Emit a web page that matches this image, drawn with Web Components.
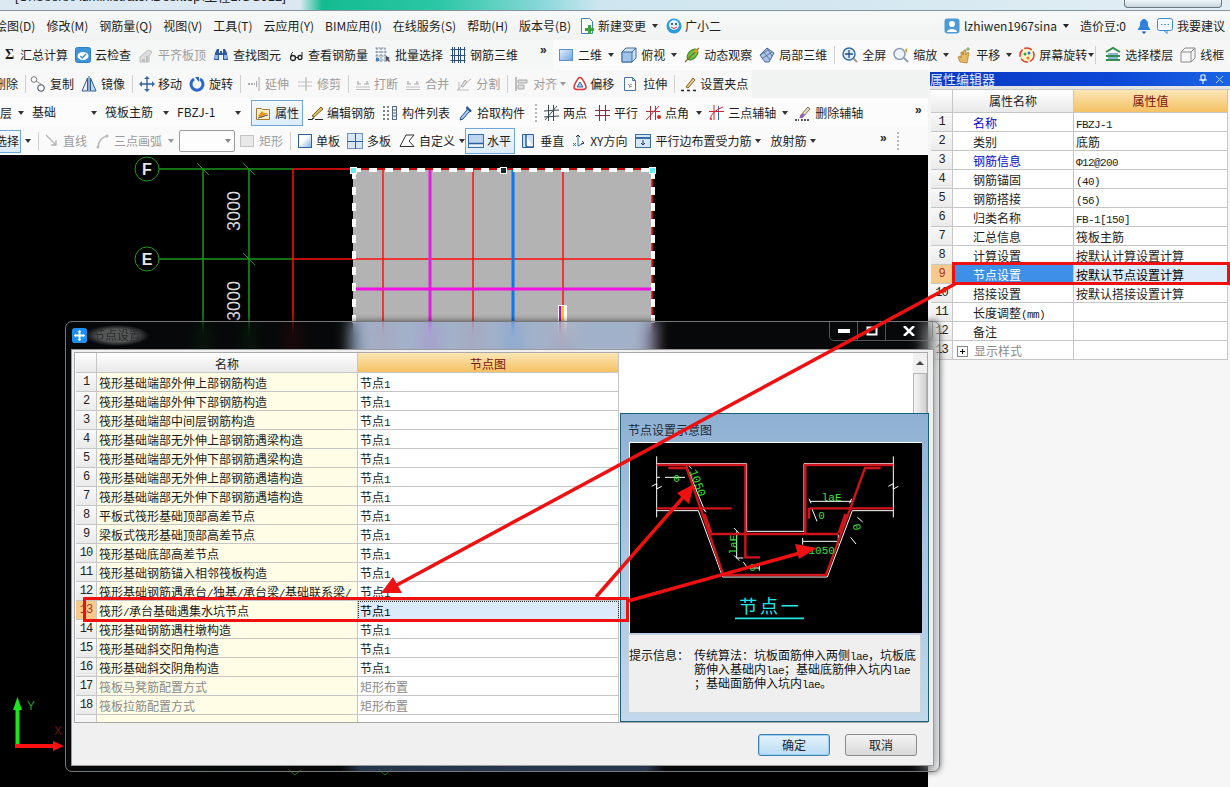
<!DOCTYPE html>
<html lang="zh-CN">
<head>
<meta charset="utf-8">
<title>节点设置</title>
<style>
html,body{margin:0;padding:0;background:#000;overflow:hidden}
body{font:12px/1.2 "Noto Sans CJK SC","Noto Sans",sans-serif;color:#1c1c1c}
</style>
</head>
<body>
<app-shell>
  <title-strip>- [C:\Users\Administrator\Desktop\工程1.GGJ12]</title-strip>
  <menu-row>
    <tb-item style="margin-left:-5px">绘图(D)</tb-item><tb-item>修改(M)</tb-item><tb-item>钢筋量(Q)</tb-item><tb-item>视图(V)</tb-item><tb-item>工具(T)</tb-item><tb-item>云应用(Y)</tb-item><tb-item>BIM应用(I)</tb-item><tb-item>在线服务(S)</tb-item><tb-item>帮助(H)</tb-item><tb-item>版本号(B)</tb-item>
    <tb-item icon="newdoc" w="14" style="margin-left:-2px" caret>新建变更</tb-item>
    <tb-item icon="smile" w="15" style="margin-left:-3px">广小二</tb-item>
    <tb-item icon="avatar" w="16" style="margin-left:auto">lzhiwen1967sina</tb-item>
    <tb-caret></tb-caret>
    <tb-item>造价豆:0</tb-item>
    <tb-item icon="bell" w="14"></tb-item>
    <tb-item icon="chat" w="16" style="margin-left:-5px;margin-right:5px">我要建议</tb-item>
  </menu-row>
  <tb-row h="30" style="--pad:3px;--bg:linear-gradient(90deg,#f5f6f6 553px,#fbfbfb 553px,#fbfbfb 930px,#f6f6f6 930px)">
    <tb-item glyph="Σ">汇总计算</tb-item>
    <tb-item icon="cloud">云检查</tb-item>
    <tb-item icon="level" disabled>平齐板顶</tb-item>
    <tb-item icon="binoc">查找图元</tb-item>
    <tb-item icon="glass">查看钢筋量</tb-item>
    <tb-item icon="batch">批量选择</tb-item>
    <tb-item icon="rebar3d">钢筋三维</tb-item>
    <tb-more style="margin-left:15px;margin-top:-10px"></tb-more>
    <tb-item icon="view2d" caret style="margin-left:3px">二维</tb-item>
    <tb-item icon="top" caret>俯视</tb-item>
    <tb-item icon="orbit">动态观察</tb-item>
    <tb-item icon="cube">局部三维</tb-item>
    <tb-sep></tb-sep>
    <tb-item icon="full">全屏</tb-item>
    <tb-item icon="zoom" caret>缩放</tb-item>
    <tb-item icon="pan" caret>平移</tb-item>
    <tb-item icon="spin" caret style="--cm:1px">屏幕旋转</tb-item>
    <tb-sep style="margin-left:-6px"></tb-sep>
    <tb-item icon="layers" style="margin-left:2px">选择楼层</tb-item>
    <tb-item icon="wire">线框</tb-item>
  </tb-row>
  <main-area>
    <left-col>
      <tb-row h="28" style="--bg:linear-gradient(90deg,#f8f8f8 752px,#f1f2f2 752px)">
        <tb-item style="margin-left:-6px">删除</tb-item>
        <tb-sep></tb-sep>
        <tb-item icon="copy" style="margin-left:-3px">复制</tb-item>
        <tb-item icon="mirror">镜像</tb-item>
        <tb-sep></tb-sep>
        <tb-item icon="move" w="14">移动</tb-item>
        <tb-item icon="rot">旋转</tb-item>
        <tb-sep></tb-sep>
        <tb-item icon="ext" w="13" disabled>延伸</tb-item>
        <tb-item icon="trim" w="17" disabled>修剪</tb-item>
        <tb-sep></tb-sep>
        <tb-item icon="brk" w="14" disabled>打断</tb-item>
        <tb-item icon="brk" disabled>合并</tb-item>
        <tb-item icon="split" disabled>分割</tb-item>
        <tb-sep></tb-sep>
        <tb-item icon="alignl" w="14" disabled caret style="--cm:3px">对齐</tb-item>
        <tb-item icon="offset" w="13">偏移</tb-item>
        <tb-item icon="stretch" w="18">拉伸</tb-item>
        <tb-sep></tb-sep>
        <tb-item icon="grip" w="14">设置夹点</tb-item>
      </tb-row>
      <tb-row h="29" style="--bg:#fcfcfc">
        <tb-item caret>层</tb-item>
        <tb-combo w="68" style="margin-left:1px">基础</tb-combo>
        <tb-combo w="67" style="margin-left:-2px">筏板主筋</tb-combo>
        <tb-combo w="67" style="margin-left:-2px">FBZJ-1</tb-combo>
        <tb-item icon="attr" active style="margin-left:0;--ap:3px">属性</tb-item>
        <tb-item icon="edit" w="15" style="margin-left:-2px">编辑钢筋</tb-item>
        <tb-item icon="list">构件列表</tb-item>
        <tb-item icon="pick">拾取构件</tb-item>
        <tb-sep dotted style="margin-left:3px"></tb-sep>
        <tb-item icon="twopt" w="15">两点</tb-item>
        <tb-item icon="para" w="14" style="margin-left:2px">平行</tb-item>
        <tb-item icon="pangle" w="14" caret style="margin-left:2px;--cm:7px">点角</tb-item>
        <tb-item icon="tri" w="15" caret>三点辅轴</tb-item>
        <tb-item icon="delax">删除辅轴</tb-item>
        <tb-more style="margin-left:auto;margin-right:5px;margin-top:-6px"></tb-more>
      </tb-row>
      <tb-row h="28" style="--bg:#fafafa">
        <tb-item active caret style="margin-left:-7px;--ap:1px;--cm:4px;--ah:23px">选择</tb-item>
        <tb-sep></tb-sep>
        <tb-item icon="line" w="13" disabled>直线</tb-item>
        <tb-item icon="arc" w="14" disabled caret style="margin-left:2px">三点画弧</tb-item>
        <tb-combo w="56" boxed style="margin-left:-2px"></tb-combo>
        <tb-item icon="chk" disabled style="margin-left:-3px">矩形</tb-item>
        <tb-sep></tb-sep>
        <tb-item icon="single" w="14">单板</tb-item>
        <tb-item icon="multi">多板</tb-item>
        <tb-item icon="custom" w="17" caret style="--cm:4px">自定义</tb-item>
        <tb-item icon="horiz" w="14" active style="margin-left:-7px;--ap:3px">水平</tb-item>
        <tb-item icon="vert" style="margin-left:-2px">垂直</tb-item>
        <tb-item icon="xy" w="15">XY方向</tb-item>
        <tb-item icon="paredge" w="17" caret style="--cm:4px">平行边布置受力筋</tb-item>
        <tb-item caret style="--cm:4px;margin-left:2px">放射筋</tb-item>
        <tb-more style="margin-left:auto;margin-top:-6px"></tb-more>
        <tb-sep dotted style="margin-left:2px;margin-right:29px"></tb-sep>
      </tb-row>
      <cad-canvas></cad-canvas>
    </left-col>
    <prop-panel>
      <data-grid cols="22px 121px 154px" hh="23" head="|属性名称|属性值"
        rows="1|名称|FBZJ-1|b;2|类别|底筋|;3|钢筋信息|Φ12@200|b;4|钢筋锚固|(40)|;5|钢筋搭接|(56)|;6|归类名称|FB-1[150]|;7|汇总信息|筏板主筋|;8|计算设置|按默认计算设置计算|;9|节点设置|按默认节点设置计算|s;10|搭接设置|按默认搭接设置计算|;11|长度调整(mm)||;12|备注||;13|显示样式||gp" indent></data-grid>
    </prop-panel>
  </main-area>
  <node-dialog></node-dialog>
  <annot-layer></annot-layer>
</app-shell>

<script>
const ICONS={
newdoc:'<path d="M2.500.5h8l3 3v12h-11z" fill="#fff" stroke="#3c7fc4"/><path d="M9 7h3v3h3v3h-3v3H9v-3H6v-3h3z" fill="#3aa63a"/>',
smile:'<circle cx="8" cy="8" r="7.500" fill="#2b9be0"/><circle cx="8" cy="7" r="5" fill="#dff3ff"/><circle cx="6" cy="6" r="1" fill="#135"/><circle cx="10" cy="6" r="1" fill="#135"/><path d="M5 9q3 3 6 0" stroke="#e33" fill="none"/>',
avatar:'<rect x=".5" y=".5" width="15" height="15" rx="3" fill="#4d9ad8"/><circle cx="8" cy="6" r="3" fill="#fff"/><path d="M3 14c0-4 10-4 10 0z" fill="#fff"/>',
bell:'<path d="M7 1h2l1 1c2 1 2 3 2 6l2 3v1H2v-1l2-3c0-3 0-5 2-6z" fill="#2f7fdc"/><path d="M5.500 13.500h5L8 16z" fill="#1d5fb0"/>',
chat:'<rect x=".5" y=".5" width="15" height="12" rx="2" fill="#f3f9ff" stroke="#3b8ad4"/><path d="M7 12.500l3 3v-3z" fill="#f3f9ff" stroke="#3b8ad4"/><path d="M4 6.500h1.500M7.300 6.500h1.500M10.500 6.500H12" stroke="#3b8ad4"/>',
cloud:'<rect x=".5" y=".5" width="15" height="15" rx="2" fill="#3f94d8" stroke="#2f7cc0"/><ellipse cx="8" cy="9" rx="5.500" ry="4" fill="#fff"/><path d="M5.300 9l2 2 3.700-4" stroke="#3f94d8" fill="none" stroke-width="1.500"/>',
level:'<path d="M2 15V10l8-7 4 2-3 4v6z" fill="#dcdcdc" stroke="#bdbdbd"/><path d="M4 15v-3h3v3zM8 15V9h2v6z" fill="#bfbfbf"/>',
binoc:'<path d="M2 6l2-4h2v4h1V4h2v2h1V2h2l2 4 1 7H10V8H6v5H1z" fill="#2a5aa0"/><path d="M2 8h3v4H2zM11 8h3v4h-3z" fill="#8fb8e8"/>',
glass:'<circle cx="5" cy="11" r="2.500" fill="none" stroke="#222" stroke-width="1.300"/><circle cx="12" cy="10.500" r="2" fill="none" stroke="#222" stroke-width="1.300"/><path d="M7.500 10.500h2.500M3 9q0-3 2-4M14 9V5" stroke="#222" fill="none"/>',
batch:'<path d="M.5 1h10M.5 5h12M.5 9h12M.5 13h14M2 1v14M6 1v14M10 1v14" stroke="#6a8199" fill="none" stroke-dasharray="2 1"/><path d="M1 11h3v3H1z" fill="#3d7fc4"/><path d="M11 9l4 2-2 1 2 2-1 1-2-2-1 2z" fill="#445"/>',
rebar3d:'<path d="M.5 2.500h15M.5 8.500h15M.5 13.500h15M2.500 0v16M4.500 0v16M8.500 0v16M10.500 0v16M14.500 0v16" stroke="#2d4e7c" fill="none"/>',
view2d:'<rect x="1.500" y="2.500" width="13" height="11" fill="url(#b)" stroke="#5c8ec8"/><defs><linearGradient id="b" x1="0" y1="0" x2="1" y2="1"><stop offset="0" stop-color="#e4f0fc"/><stop offset="1" stop-color="#6ea4e0"/></linearGradient></defs>',
top:'<path d="M1 5l4-4h10v10l-4 4H1z" fill="#cfe2f5" stroke="#3a6a9a"/><path d="M1 5h10v10H1z" fill="#9fc3ea" stroke="#3a6a9a"/><path d="M11 5l4-4" stroke="#3a6a9a"/>',
orbit:'<ellipse cx="8.500" cy="7.500" rx="4" ry="6.500" transform="rotate(45 8.500 7.500)" fill="#6fc23e" stroke="#2f7f24"/><path d="M1 15L15 1" stroke="#8a6a2a" stroke-width="1.200"/><circle cx="12" cy="4" r="1.800" fill="#e8a020"/>',
cube:'<path d="M8 1l7 5-5 9H6L1 8z" fill="#a9c4e6" stroke="#4e6a93"/><path d="M4 4l7 9M8 1l5 8M1 8l8-5M4 11l9-6" stroke="#4e6a93" fill="none" stroke-width=".8"/>',
full:'<circle cx="7" cy="7" r="6" fill="#e2edf8" stroke="#2c6aa8" stroke-width="1.400"/><path d="M7 3v8M3 7h8" stroke="#1f4f84" stroke-width="1.300"/><path d="M11.500 11.500l3.500 3.500" stroke="#999" stroke-width="2"/>',
zoom:'<circle cx="6.500" cy="7" r="5.500" fill="#eef3f8" stroke="#8a9fb4" stroke-width="1.500"/><path d="M11 11l4 4" stroke="#8a9fb4" stroke-width="2"/><path d="M12 3l2-2v5z" fill="#d89a20"/>',
pan:'<path d="M4 15l-2-5 2-1 1 2V5l2 0v3l1-5h2v5l2-3 1 1-1 5-1 5z" fill="#e4b860" stroke="#9c6b18" stroke-width=".6"/><path d="M12 0v4M10 2h4" stroke="#6a5"/>',
spin:'<circle cx="8" cy="8" r="7" fill="#fff4c8" stroke="#e23a2a" stroke-width="1.500" stroke-dasharray="8 2"/><circle cx="6" cy="7" r="1.500" fill="#40a040"/><circle cx="10" cy="6" r="1.500" fill="#3070d0"/><circle cx="9" cy="11" r="1.500" fill="#e08020"/>',
layers:'<path d="M1 5l7-4 7 4M1 9h14M1 13h14" stroke="#2f8f4a" stroke-width="2" fill="none"/><path d="M3 7h10M3 11h10" stroke="#2a6fb8"/>',
wire:'<path d="M1 5l4-4h10v10l-4 4H1zM1 5h10v10M11 5l4-4" fill="none" stroke="#8a8a8a"/>',
copy:'<circle cx="4" cy="3.500" r="2.800" fill="#fff" stroke="#777"/><circle cx="11" cy="12" r="3.300" fill="#fff" stroke="#345"/><path d="M6 5l8 5" stroke="#888"/>',
mirror:'<path d="M6.500 2L1 15h5.500z" fill="#e6eff8" stroke="#2e5f92"/><path d="M9.500 2L15 15H9.500z" fill="#c4d9f0" stroke="#2e5f92"/><path d="M8 0v16" stroke="#2e5f92"/>',
move:'<path d="M8 1v14M1 8h14" stroke="#2f5f98" stroke-width="1.300"/><path d="M8 0l3 3H5zM8 16l3-3H5zM0 8l3-3v6zM16 8l-3-3v6z" fill="#3b6da8"/>',
rot:'<path d="M5 3a6 6 0 1 0 6 0" fill="none" stroke="#2a68c8" stroke-width="3"/><path d="M6 1h4v5z" fill="#2a68c8"/>',
ext:'<path d="M1 8h7" stroke="#aaa" stroke-dasharray="2 1" stroke-width="2"/><path d="M9.500 5v6M12 1v14" stroke="#aaa"/>',
trim:'<path d="M1 6h14M1 10h14" stroke="#c4c4c4"/><path d="M9 1v14" stroke="#aaa"/>',
brk:'<path d="M1 11h14M1 13.500h14" stroke="#c0c0c0"/><path d="M2 8h4M9 8h5M3 5v3M12 5v3" stroke="#a8a8a8" stroke-width="1.200"/>',
split:'<path d="M1 14L15 3M1 14h12M3 6v8" stroke="#bbb" fill="none"/><path d="M5 10l4-6 2 2-4 5z" fill="#ddd" stroke="#aaa"/>',
alignl:'<path d="M2 1v14" stroke="#aaa" stroke-width="1.500"/><path d="M4 4h9v3H4zM4 9h6v4H4z" fill="#ddd" stroke="#aaa"/>',
offset:'<path d="M8 1.500c2 0 6 7 6 10 0 2-2 2-6 2s-6 0-6-2c0-3 4-10 6-10z" fill="#fff" stroke="#d33" stroke-width="1.500"/><path d="M8 6l3 5H5z" fill="#9fc4ea" stroke="#3a6a9a"/>',
stretch:'<path d="M2.500 1.500h8l3 3v10h-11z" fill="#fff" stroke="#47749e"/><path d="M10.500 1.500v3h3" fill="none" stroke="#47749e"/><path d="M6 8l3 3M9 8v3H6" stroke="#446" stroke-dasharray="1 1" fill="none"/>',
grip:'<path d="M0 14.500h3M6 14.500h3M12 14.500h3" stroke="#222" stroke-width="1.500"/><path d="M5 11l7-9 2 2-7 8z" fill="#e8cc90" stroke="#80601c"/>',
attr:'<path d="M1.500 3.500h5l1 1h7v10h-13z" fill="#fbeec8" stroke="#a47a2e"/><path d="M3 11l4-5 2 2 4 0-5 4-2 1z" fill="#e8951e"/><path d="M3 13l10-3" stroke="#556"/>',
edit:'<path d="M0 14.500h4l2-2M7 14.500h8" stroke="#222" stroke-width="1.200" fill="none"/><path d="M4 11l9-9 2 2-9 8z" fill="#e4c070" stroke="#7a5a18"/>',
list:'<path d="M1 2h2M5 2h2M1 6h2M5 6h2M1 10h2M5 10h2M1 14h2M5 14h2" stroke="#556" stroke-width="1.500"/><rect x="10.500" y="1.500" width="4" height="13" fill="#eef2f6" stroke="#5b6b7a"/><path d="M11 5h3M11 8h3M11 11h3" stroke="#5b6b7a"/>',
pick:'<path d="M10 2l4 4-2 1-6 7-3 1 1-3 6-7z" fill="#a9c9ee" stroke="#1f4f94"/><path d="M10 1l5 5-2 1-4-4z" fill="#1f4f94"/>',
twopt:'<path d="M4.500 0v16M9.500 0v16M0 6l15-1M0 12l15-1M1 15L13 1" stroke="#3a4a55" fill="none"/>',
para:'<path d="M4.500 0v16M10.500 0v16M0 5.500h15M0 10.500h15" stroke="#8a2a3a" fill="none"/>',
pangle:'<path d="M4.500 1v14M9.500 1v14M0 6.500h14M0 15L13 1" stroke="#b5303a" fill="none"/><circle cx="13" cy="12" r="2" fill="#d22"/>',
tri:'<path d="M9.500 1v14" stroke="#3a6ab0"/><path d="M0 6.500h15M1 14Q3 6 14 2M5 0v15" stroke="#d81f2f" fill="none"/><circle cx="2" cy="14" r="1" fill="#d81f2f"/>',
delax:'<path d="M0 15h4M6 15h9" stroke="#222" stroke-width="1.300" stroke-dasharray="2 1"/><path d="M5 11l8-9 2 2-8 9z" fill="#e8e0c8" stroke="#7a6a4a"/><path d="M4 13l4-5 2 2-3 3z" fill="#9a5ad0"/>',
line:'<path d="M1 2l10 10M11 7v5H6" stroke="#b5b5b5" stroke-width="1.300" fill="none"/>',
arc:'<path d="M3 14Q4 5 12 3" stroke="#bbb" stroke-width="1.500" fill="none"/><circle cx="3" cy="14" r="1.500" fill="#bbb"/><circle cx="12" cy="3" r="1.500" fill="#bbb"/>',
chk:'<rect x="1.500" y="2.500" width="13" height="11" fill="#e8e8e8" stroke="#c4c4c4"/>',
single:'<rect x="1.500" y="1.500" width="13" height="13" fill="url(#s)" stroke="#2c5f9e"/><defs><linearGradient id="s" x1="0" y1="0" x2="1" y2="1"><stop offset=".4" stop-color="#fff"/><stop offset="1" stop-color="#7fb0e8"/></linearGradient></defs>',
multi:'<rect x=".5" y=".5" width="15" height="15" fill="#d8e6f5" stroke="#6e93ba"/><path d="M8.500 0v16M0 8.500h16" stroke="#2c5f9e"/>',
custom:'<path d="M1 13.500L7 2h8L10 8l5 5.500z" fill="#fff" stroke="#333"/>',
horiz:'<rect x=".5" y="1.500" width="15" height="13" fill="#e6f0fa" stroke="#3b6ea6"/><rect x="1" y="2" width="14" height="8" fill="#bcd5ef"/><path d="M1 10.500h14" stroke="#2c5f9e" stroke-width="1.500"/>',
vert:'<path d="M2.500 1.500h11v13h-11z" fill="#cfe1f5" stroke="#2c5f9e"/><path d="M6 2v10q0 2 2 2h5" fill="#fff" stroke="#2c5f9e" stroke-width="1.500"/>',
xy:'<path d="M7 2v11M7 13l6-3" stroke="#2a6fb8" fill="none"/><path d="M5 4l2-2 2 2M11 8l2 2-3 1" stroke="#333" fill="none"/><path d="M2 10l3 3M5 10l-3 3" stroke="#2a6fb8"/>',
paredge:'<rect x=".5" y="1.500" width="15" height="13" fill="#d5e6f8" stroke="#3a6ea6"/><path d="M1 5h14" stroke="#3a6ea6" stroke-width="2"/><path d="M8 7v5M6 10l2 2 2-2" stroke="#2a3a5a" fill="none"/>'
};
class Base extends HTMLElement{
  constructor(){super();this.attachShadow({mode:'open'});}
  connectedCallback(){this.shadowRoot.innerHTML=`<style>${this.css()}</style>${this.tpl()}`;}
  css(){return ':host{display:block}'} tpl(){return '<slot></slot>'}
}
const mono=s=>s.replace(/[\x20-\x7eΦ]+/g,m=>`<span class="a">${m}</span>`);
const reg=(n,css,tpl)=>customElements.define(n,class extends Base{css(){return css.call?css.call(this):css}tpl(){return tpl?tpl.call(this):'<slot></slot>'}});
const MONO='.a{font:11px "Liberation Mono",monospace;letter-spacing:-.6px}';

reg('app-shell',':host{display:flex;flex-direction:column;position:relative;width:1230px;height:787px;overflow:hidden;background:#f3f4f4}');
reg('title-strip',`:host{display:flex;height:10px;flex:none;overflow:hidden;border-bottom:1px solid #87929b;
 background:linear-gradient(90deg,#dde9f2 0,#dbe8f2 300px,#13bb90 322px,#2cc7a6 440px,#8fd9dc 548px,#cfe6f0 600px,#d6e8f0 900px,#e4eff5 100%)}
 .t{margin:-12px 0 0 7px;font:13px/18px "Liberation Sans","Noto Sans CJK SC",sans-serif;color:#222;white-space:nowrap}
 .w{margin-left:auto;margin-right:8px;width:96px;height:7px;border:1px solid #6c7780;border-top:0;border-radius:0 0 4px 4px;background:linear-gradient(#eef4f8,#c8d6e0)}`,
 ()=>'<div class="t"><slot></slot></div><div class="w"></div>');
reg('menu-row',':host{display:flex;align-items:center;gap:11px;height:29px;flex:none;overflow:hidden;background:linear-gradient(#f7f8f8,#f1f2f2)}');
reg('tb-row',function(){return `:host{display:flex;align-items:center;gap:7px;height:${this.getAttribute('h')}px;flex:none;overflow:hidden;padding-left:var(--pad,0);box-sizing:border-box;background:var(--bg,#f5f6f6)}`});
reg('main-area',':host{display:flex;flex:1;min-height:0}');
reg('left-col',':host{display:flex;flex-direction:column;flex:0 0 928px;width:928px}');
reg('tb-caret',':host{display:block;flex:none;width:0;height:0;margin-left:-5px;border:3px solid transparent;border-top:4px solid #222;border-bottom:0}',()=>'');
customElements.define('x-icon',class extends Base{
  css(){const w=this.getAttribute('w')||16;return `:host{display:flex;justify-content:center;flex:none;width:${w}px;height:16px}svg{flex:none;width:16px;height:16px;overflow:visible}`}
  tpl(){return `<svg viewBox="0 0 16 16">${ICONS[this.getAttribute('name')]||''}</svg>`}
});
customElements.define('tb-item',class extends Base{
  css(){return `:host{display:inline-flex;align-items:center;flex:none;gap:4px;white-space:nowrap;color:#1e1e1e;font-size:12px;line-height:16px}
   :host([disabled]){color:#9c9c9c}
   .bg{display:contents}
   :host([active]) .bg{display:inline-flex;align-items:center;gap:4px;height:var(--ah,26px);box-sizing:border-box;border:1px solid #6ea6d8;background:linear-gradient(#f4f9fd,#dcecfa);padding:0 var(--ap,2px)}
   .g{font:bold 14px/16px "Liberation Serif",serif;width:13px;text-align:center}
   .c{flex:none;width:0;height:0;border:3px solid transparent;border-top:4px solid #333;border-bottom:0;margin-left:calc(var(--cm,6px) - 4px)}
   :host([disabled]) .c{border-top-color:#999}`}
  tpl(){const ic=this.getAttribute('icon'),g=this.getAttribute('glyph');
    return `<div class="bg">${ic?`<x-icon name="${ic}" w="${this.getAttribute('w')||16}"></x-icon>`:''}${g?`<span class="g">${g}</span>`:''}<slot></slot></div>${this.hasAttribute('caret')?'<span class="c"></span>':''}`}
});
reg('tb-sep',function(){return `:host{display:block;flex:none;width:${this.hasAttribute('dotted')?0:1}px;height:18px;${this.hasAttribute('dotted')?'border-left:2px dotted #b4b8bf':'background:#cfcfcf'}}`},()=>'');
reg('tb-more',':host{display:block;flex:none;width:8px;font:bold 12px/12px "Liberation Sans",sans-serif;color:#222}',()=>'»');
customElements.define('tb-combo',class extends Base{
  css(){const b=this.hasAttribute('boxed');return `:host{display:flex;align-items:center;justify-content:space-between;box-sizing:border-box;flex:none;width:${this.getAttribute('w')}px;height:${b?22:24}px;padding:0 3px 0 ${b?4:0}px;${b?'background:#fdfdfd;border:1px solid #9a9a9a;border-radius:2px;':''}white-space:nowrap}
  i{width:0;height:0;border:3px solid transparent;border-top:4px solid ${b?'#888':'#333'};border-bottom:0}`}
  tpl(){return '<span><slot></slot></span><i></i>'}
});
reg('cad-canvas',':host{display:block;flex:1;background:#000}svg{display:block}',()=>`
<svg width="928" height="632" viewBox="0 155 928 632" font-family="Liberation Sans,sans-serif">
 <rect x="353" y="170" width="299" height="530" fill="#b3b3b3"/>
 <g stroke="#1c961c" fill="none" stroke-width="1.500">
  <path d="M159 169H293M159 259H293M203 169V765M249 169V765"/>
 </g>
 <g stroke="#1c961c" fill="none">
  <path d="M197 163l12 12M243 163l12 12M243 253l12 12"/>
  <circle cx="147" cy="169" r="12"/><circle cx="147" cy="259" r="12"/>
  <path d="M288 769l7 6 7-6M378 769l7 6 7-6"/>
 </g>
 <g fill="#e6e6e6" font-weight="bold" font-size="16" text-anchor="middle"><text x="147" y="175">F</text><text x="147" y="265">E</text></g>
 <g fill="#dcdcdc" font-size="18" text-anchor="middle"><text transform="translate(240 211) rotate(-90)">3000</text><text transform="translate(240 301) rotate(-90)">3000</text></g>
 <g stroke="#ff1010" fill="none" stroke-width="1.500"><path d="M293 169H652M293 259H652M293 169V765M383 169V760M473 169V760M563 169V760M652 169V760"/></g>
 <path d="M430 170V760" stroke="#e020e0" stroke-width="3"/><path d="M513 170V760" stroke="#0a78f0" stroke-width="3"/>
 <path d="M353 289H652" stroke="#f010e0" stroke-width="3"/>
 <rect x="558" y="305" width="9" height="30" fill="#fff"/><rect x="559" y="306" width="2" height="30" fill="#b010c0"/><rect x="561" y="306" width="3" height="30" fill="#ffc800"/>
 <path d="M353.500 171V330M652.500 171V330M353 170H652" stroke="#fff" stroke-width="4" fill="none" stroke-dasharray="8 8" shape-rendering="crispEdges"/>
 <g fill="#102a2a" stroke="#fff" shape-rendering="crispEdges"><rect x="350.500" y="167.500" width="6" height="6" fill="#6ee"/><rect x="500.500" y="167.500" width="6" height="6"/><rect x="649.500" y="167.500" width="6" height="6" fill="#6ee"/></g>
 <path d="M17.500 747V708" stroke="#1ee61e" stroke-width="4"/><path d="M17.500 697l4.500 13h-9z" fill="#1ee61e"/>
 <path d="M15 746H54" stroke="#ff1010" stroke-width="4"/><path d="M64 746l-11-5v10z" fill="#ff1010"/>
 <text x="27" y="710" font-size="12" fill="#2a9a2a">Y</text>
 <text x="54" y="735" font-size="12" fill="#701818">X</text>
</svg>`);
reg('prop-panel',`:host{display:block;flex:0 0 300px;width:300px;margin-left:2px;background:#f6f6f6;box-sizing:border-box;padding-top:2px}
 .t{display:flex;align-items:center;height:14px;padding-right:6px;color:#dfeaff;font-size:13px;line-height:14px;background:linear-gradient(90deg,#0a39c2,#0c47d6 60%,#1a63e4)}
 .t span{flex:1}.t svg{margin-left:7px}
 .b{height:3px;background:#e4e4e4;border-bottom:1px solid #c8c8c8}
 ::slotted(data-grid){margin-left:1px}`,
 ()=>`<div class="t"><span>属性编辑器</span><svg width="10" height="10" viewBox="0 0 10 10"><path d="M3 1h4v5H3zM1 6h8M5 6v4" stroke="#fff" fill="none"/></svg><svg width="9" height="9" viewBox="0 0 9 9"><path d="M1 1l7 7M8 1L1 8" stroke="#b8d0f0"/></svg></div><div class="b"></div><slot></slot>`);
customElements.define('data-grid',class extends Base{
  css(){const ind=this.hasAttribute('indent');return `:host{display:grid;grid-template-columns:${this.getAttribute('cols')};grid-template-rows:${this.getAttribute('hh')}px;grid-auto-rows:19px;font-size:12px;line-height:19px;width:max-content}
  div{box-sizing:border-box;border-right:1px solid #c6c6c6;border-bottom:1px solid #c6c6c6;white-space:nowrap;overflow:hidden;padding-left:2px;background:#fff;color:#1c1c1c}
  .h{text-align:center;line-height:21px;background:linear-gradient(#fff,#e9e9e9);padding:0}
  .h.v{background:linear-gradient(#fbe6b6,#f5c163);color:#7c1212}
  .n{padding:0;text-align:center;background:linear-gradient(#f9f9f9,#eaeaea);color:#222;font:12px/19px "Liberation Mono",monospace;letter-spacing:-1px}
  .c1{padding-left:${ind?20:2}px;${ind?'':'background:#fffde6;'}}
  .b{color:#0a0ac8}.g{color:#8a8a8a}
  .n.sel{background:#f9c98a;color:#a33}
  .c1.s{background:#3e8fe8;color:#fff}.c2.s{background:#dcebfb;color:#000}
  .c2.d{background:#dcebfb;color:#000;outline:1px dotted #333;outline-offset:-1px}
  ${MONO}
  .p{display:inline-block;width:9px;height:9px;border:1px solid #888;background:linear-gradient(90deg,#000,#000) center/5px 1px no-repeat,linear-gradient(#000,#000) center/1px 5px no-repeat,#fff;vertical-align:-1px;margin:0 6px 0 -16px}`}
  tpl(){
    const h=this.getAttribute('head').split('|');
    const hd=`<div class="h"></div><div class="h">${h[1]}</div><div class="h v">${h[2]}</div>`;
    const rows=this.getAttribute('rows').split(';').map(r=>{const[n,a,b,f='']=r.split('|');
      const col=(f.includes('g')?' g':'')+(f.includes('b')?' b':'');
      const sel=f.includes('s')||f.includes('d');
      return `<div class="n${sel?' sel':''}">${n}</div><div class="c1${col}${f.includes('s')?' s':''}${f.includes('d')?' d':''}">${f.includes('p')?'<span class="p"></span>':''}${mono(a)}</div><div class="c2${f.includes('g')&&!this.hasAttribute('indent')?' g':''}${f.includes('s')?' s':''}${f.includes('d')?' d':''}">${mono(b)}</div>`}).join('');
    return hd+rows;
  }
});
reg('scroll-bar',`:host{display:block;width:14px;background:#f0f0f0;flex:none;height:100%}
 .u{height:20px;display:flex;align-items:center;justify-content:center}
 .u i{width:0;height:0;border:4px solid transparent;border-bottom:4px solid #444;border-top:0}
 .t{height:60px;background:linear-gradient(90deg,#f4f4f4,#d2d2d2);border:1px solid #b5b5b5;box-sizing:border-box}`,()=>'<div class="u"><i></i></div><div class="t"></div>');
reg('dlg-button',function(){const p=this.hasAttribute('primary');return `:host{display:flex;align-items:center;justify-content:center;box-sizing:border-box;width:72px;height:22px;border-radius:3px;font-size:12px;color:#222;
 border:1px solid ${p?'#3c7fb1':'#8a8a8a'};background:linear-gradient(${p?'#e4f2fb,#b9dcf4':'#f4f4f4,#d8d8d8'});${p?'box-shadow:inset 0 0 0 1px #9bd0f0;':''}}`});
reg('hint-box',`:host{display:grid;grid-template-columns:65px 1fr;margin:1px 7px 0 7px;height:79px;box-sizing:border-box;padding-top:14px;background:#efefef;font-size:12px;line-height:12px;color:#111;border:1px solid #c9d3dc}
 ${MONO}`,()=>`<span>提示信息：</span><span>${mono('传统算法：坑板面筋伸入两侧lae，坑板底')}<br>${mono('筋伸入基础内lae；基础底筋伸入坑内lae')}<br>${mono('；基础面筋伸入坑内lae。')}</span>`);
reg('node-diagram',':host{display:block;margin-left:8px;width:292px;height:190px;background:#000;border:solid #fff;border-width:1px 0 0 1px}svg{display:block}',()=>`
<svg width="291" height="190" viewBox="30 95 873 570" font-family="Liberation Mono,monospace">
 <g stroke="#fff" stroke-width="3" fill="none">
  <path d="M110 135V318M820 135V318"/>
  <path d="M110 157H380V360H552V157H820"/>
  <path d="M110 298H235L308 497H622L697 298H820"/>
  <path d="M95 225l15-8v16l15-8M805 225l15-8v16l15-8"/>
  <path d="M135 198h60M110 198h10M200 165l55 135"/>
  <path d="M570 270H695M548 390H655M350 360V440M350 440h20M378 470h40"/>
  <path d="M567 262l6 14M695 262l-6 14M548 380v20M655 370v30M342 350l16 16M342 432l16 16M370 452l14 20M418 458v20"/>
  <path d="M575 290l16 40M692 378l16 20M712 318l16 14"/>
  <path d="M203 160l12 12M245 290l14 12"/>
 </g>
 <g stroke="#d0141c" fill="none" stroke-width="7">
  <path d="M110 161H376V438H420"/><path d="M556 368V161H820"/>
  <path d="M110 291H335M570 291H820"/>
  <path d="M145 170H200L310 491H618L735 170H782"/>
  <path d="M272 368H655"/><path d="M567 290V322"/>
  <path d="M252 308L272 365M678 308L658 365" stroke-width="11"/>
 </g>
 <g fill="#3fe03f" font-size="33" text-anchor="middle">
  <text x="170" y="212">0</text>
  <text transform="translate(232 215) rotate(70)" font-size="35" text-anchor="middle" y="10">1050</text>
  <text transform="translate(350 400) rotate(-90)">laE</text>
  <text x="398" y="480">0</text>
  <text x="635" y="268">laE</text>
  <text x="605" y="323">0</text>
  <text x="605" y="427">1050</text>
  <text transform="translate(700 350) rotate(75)">0</text>
 </g>
 <text x="451" y="604" font-family="Noto Sans CJK SC,sans-serif" font-size="54" letter-spacing="8" text-anchor="middle" fill="#20e8e8">节点一</text>
 <path d="M345 621H552" stroke="#20e8e8" stroke-width="5"/>
</svg>`);
reg('node-panel',`:host{display:block;position:absolute;left:545px;top:60px;width:309px;height:309px;box-sizing:border-box;border:1px solid #1d5f78;background:linear-gradient(#8eb0d2,#a8c4e0 40%,#c2d7ea)}
 .t{height:28px;padding-left:7px;line-height:31px;font-size:12px;color:#1c2a36}`,()=>'<div class="t">节点设置示意图</div><node-diagram></node-diagram><hint-box></hint-box>');
reg('node-dialog',`:host{display:flex;flex-direction:column;position:absolute;left:65px;top:321px;width:875px;height:451px;box-sizing:border-box;border:1px solid #777;border-radius:7px;padding:0 5px 5px;
 background:linear-gradient(90deg,rgba(0,0,0,0) 275px,rgba(120,170,255,.28) 295px,rgba(120,170,255,.28) 580px,rgba(0,0,0,0) 600px),rgba(165,200,240,.04);backdrop-filter:blur(9px);box-shadow:0 0 6px rgba(0,0,0,.6)}
 .tb{display:flex;align-items:center;height:27px;flex:none;gap:6px;padding-left:1px;color:#2c2c2c;font-size:12px}
 .tb .ttl{padding:3px 8px;margin:0 -8px;background:radial-gradient(closest-side,rgba(150,150,150,.55) 60%,rgba(150,150,150,0))}
 .ctl{margin-left:auto;display:flex;align-self:flex-start;height:18px;margin-right:1px;border:1px solid rgba(120,120,120,.7);border-top:0;border-radius:0 0 5px 5px}
 .ctl b{display:flex;align-items:center;justify-content:center;height:18px;width:27px;border-right:1px solid rgba(120,120,120,.7)}
 .ctl b:last-child{width:46px;border:0}
 .cl{flex:1;display:flex;flex-direction:column;background:#f0f0f0;border:1px solid #9a9a9a;padding:2px 5px 0 2px;min-height:0}
 .box{position:relative;flex:none;height:369px;display:flex;background:#fff;border:1px solid #a9a9a9}
 .gw{flex:none;width:546px;height:100%;overflow:hidden;margin-left:1px;background:#fff}
 .sp{flex:1}
 .ft{flex:1;display:flex;align-items:center;justify-content:flex-end;gap:15px;padding:2px 11px 0 0}`,
 ()=>`<div class="tb"><svg width="15" height="15" viewBox="0 0 16 16"><rect width="16" height="16" rx="3" fill="#1e90f0"/><path d="M8 2l2 2H9v3h3V6l2 2-2 2V9H9v3h1l-2 2-2-2h1V9H4v1L2 8l2-2v1h3V4H6z" fill="#fff"/></svg><span class="ttl">节点设置</span>
 <div class="ctl"><b><svg width="12" height="4"><rect width="12" height="4" fill="#fff"/></svg></b><b><svg width="12" height="10" viewBox="0 0 12 10"><path d="M1.500 1.500h9v7h-9z" fill="none" stroke="#fff" stroke-width="2"/></svg></b><b><svg width="12" height="10" viewBox="0 0 12 10"><path d="M1 0l10 10M11 0L1 10" stroke="#fff" stroke-width="2.500"/></svg></b></div></div>
 <div class="cl"><div class="box"><div class="gw"><data-grid cols="21px 261px 261px" hh="20" head="|名称|节点图" rows="1|筏形基础端部外伸上部钢筋构造|节点1|;2|筏形基础端部外伸下部钢筋构造|节点1|;3|筏形基础端部中间层钢筋构造|节点1|;4|筏形基础端部无外伸上部钢筋遇梁构造|节点1|;5|筏形基础端部无外伸下部钢筋遇梁构造|节点1|;6|筏形基础端部无外伸上部钢筋遇墙构造|节点1|;7|筏形基础端部无外伸下部钢筋遇墙构造|节点1|;8|平板式筏形基础顶部高差节点|节点1|;9|梁板式筏形基础顶部高差节点|节点1|;10|筏形基础底部高差节点|节点1|;11|筏形基础钢筋锚入相邻筏板构造|节点1|;12|筏形基础钢筋遇承台/独基/承台梁/基础联系梁/|节点1|;13|筏形/承台基础遇集水坑节点|节点1|d;14|筏形基础钢筋遇柱墩构造|节点1|;15|筏形基础斜交阳角构造|节点1|;16|筏形基础斜交阴角构造|节点1|;17|筏板马凳筋配置方式|矩形布置|g;18|筏板拉筋配置方式|矩形布置|g;||"></data-grid></div><div class="sp"></div><scroll-bar></scroll-bar><node-panel></node-panel></div>
 <div class="ft"><dlg-button primary>确定</dlg-button><dlg-button>取消</dlg-button></div></div>`);
reg('annot-layer',':host{position:absolute;left:0;top:0;width:1230px;height:787px;pointer-events:none}svg{display:block}',()=>`
<svg width="1230" height="787" viewBox="0 0 1230 787" fill="none" stroke="#ee1111" stroke-width="3">
 <rect x="953.500" y="263.500" width="275" height="20"/>
 <rect x="84.500" y="598.500" width="543" height="22"/>
 <path d="M955 284L395 586" stroke-width="3.500"/><path d="M381 593l12-16 9 16z" fill="#ee1111" stroke="none"/>
 <path d="M596 597L686 494" stroke-width="3.500"/><path d="M694 484l-5 20-12-11z" fill="#ee1111" stroke="none"/>
 <path d="M628 601L800 553" stroke-width="3.500"/><path d="M817 548l-18 11-4-15z" fill="#ee1111" stroke="none"/>
</svg>`);
</script>
</body>
</html>
